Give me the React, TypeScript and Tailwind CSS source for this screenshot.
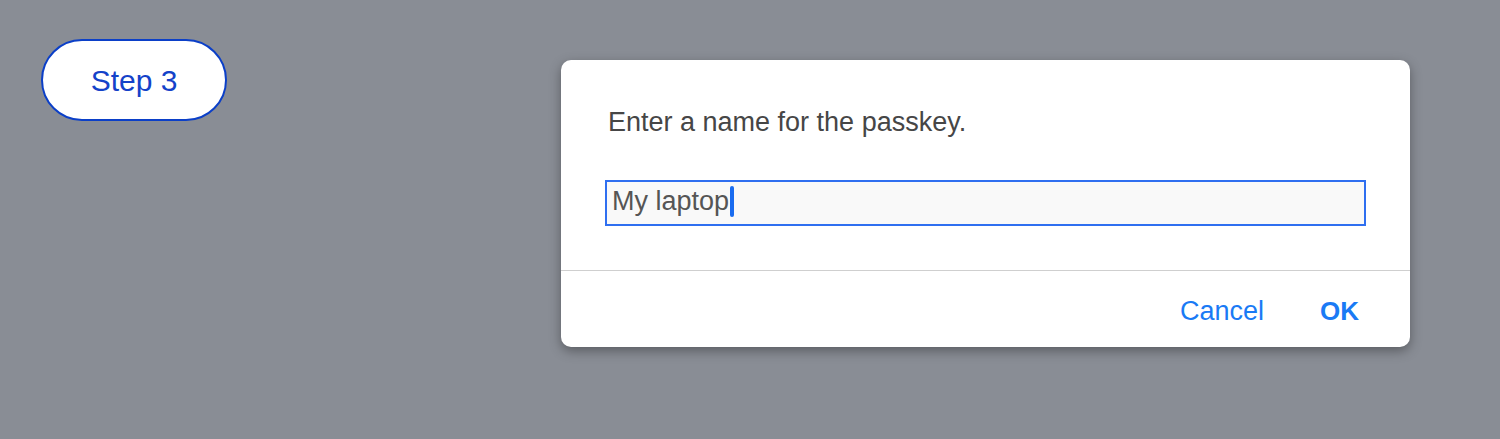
export default function App() {
  return (
    <div className="h-[439px] w-[1500px] bg-[#898d95] flex items-start overflow-hidden" style={{ fontFamily: '"Liberation Sans", Arial, sans-serif' }}>
      <button className="ml-[41px] mt-[39px] w-[186px] h-[82px] rounded-full bg-white border-2 border-[#0b3fc8] text-[#1442c9] text-[30px] flex items-center justify-center">
        Step 3
      </button>
      <div className="ml-[334px] mt-[60px] w-[849px] h-[287px] bg-white rounded-[10px] shadow-[0_4px_12px_rgba(0,0,0,0.35)] flex flex-col">
        <div className="px-[47px] pt-[46px] h-[211px] border-b border-[#cfcfcf]">
          <p className="text-[27px] text-[#464646] leading-[32px]">Enter a name for the passkey.</p>
          <div className="mt-[42px] ml-[-3px] w-[761px] h-[46px] border-2 border-[#2f6ff0] bg-[#f9f9f9] flex items-center pl-[5px] pb-[4px]">
            <span className="text-[27px] text-[#555] leading-[32px]">My laptop</span>
            <span className="w-[4px] h-[31px] bg-[#1a6cf0] rounded-sm ml-[1px]"></span>
          </div>
        </div>
        <div className="flex-1 flex items-center justify-end pr-[51px] gap-[56px] pt-[4px]">
          <span className="text-[27px] text-[#1a7af5]">Cancel</span>
          <span className="text-[26px] text-[#1a7af5] font-semibold">OK</span>
        </div>
      </div>
    </div>
  );
}
